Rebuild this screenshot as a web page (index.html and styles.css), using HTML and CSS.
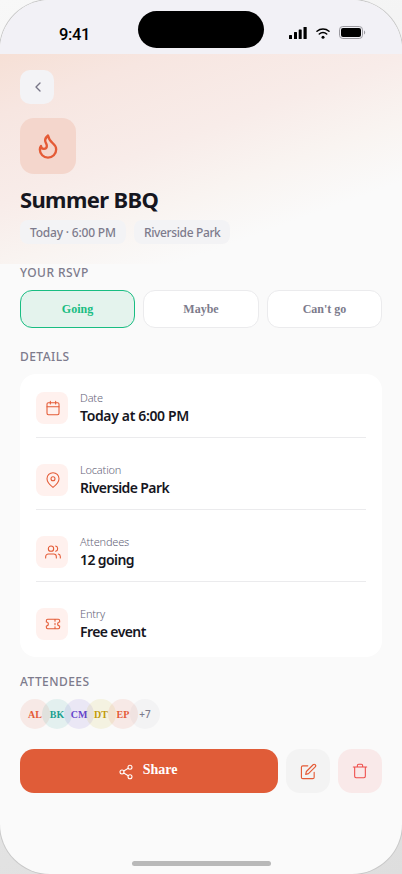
FILE: index.html
```html
<!DOCTYPE html>
<html lang="en">
<head>
<meta charset="utf-8">
<meta name="viewport" content="width=device-width, initial-scale=1">
<title>Summer BBQ</title>
<link rel="stylesheet" href="styles.css">
</head>
<body>
<div class="phone">
  <div class="status">
    <span class="time">9:41</span>
    <span class="island"></span>
    <span class="signals">
      <svg width="18" height="12" viewBox="0 0 18 12"><rect x="0" y="8" width="3" height="4" rx=".6"/><rect x="5" y="5" width="3" height="7" rx=".6"/><rect x="9.700" y="2.500" width="3" height="9.500" rx=".6"/><rect x="14.500" y="0" width="3.200" height="12" rx=".6"/></svg>
      <svg class="wifi" width="14" height="12" viewBox="0 0 14 12"><path d="M1 4.300a9 9 0 0 1 12 0M3.300 7a5.600 5.600 0 0 1 7.400 0" fill="none" stroke="#000" stroke-width="1.500" stroke-linecap="round"/><circle cx="7" cy="10.300" r="1.500"/></svg>
      <svg class="battery" width="27" height="13" viewBox="0 0 27 13"><rect x=".5" y=".5" width="23" height="12" rx="3.300" fill="none" stroke="#9b9aa0"/><rect x="2" y="2" width="20" height="9" rx="2"/><path d="M25 4.500v4c1.600-.7 1.600-3.300 0-4z" fill="#9b9aa0"/></svg>
    </span>
  </div>
  <header class="hero">
    <button class="back" aria-label="Back"><svg class="line" width="16" height="16" viewBox="0 0 24 24"><path d="m15 18-6-6 6-6"/></svg></button>
    <div class="emblem"><svg class="line" width="28" height="28" viewBox="0 0 24 24"><path d="M8.500 14.500A2.500 2.500 0 0 0 11 12c0-1.380-.5-2-1-3-1.072-2.143-.224-4.054 2-6 .5 2.500 2 4.900 4 6.500 2 1.600 3 3.500 3 5.500a7 7 0 1 1-14 0c0-1.153.433-2.294 1-3a2.500 2.500 0 0 0 2.500 2.500z"/></svg></div>
    <h1>Summer BBQ</h1>
    <div class="chips"><span class="chip chip-time">Today · 6:00 PM</span><span class="chip chip-place">Riverside Park</span></div>
  </header>
  <main>
    <h2>YOUR RSVP</h2>
    <div class="rsvp"><button class="on">Going</button><button>Maybe</button><button>Can't go</button></div>
    <h2>DETAILS</h2>
    <section class="card">
      <div class="row"><span class="tile"><svg class="line" width="16" height="16" viewBox="0 0 24 24"><rect x="3" y="4" width="18" height="18" rx="2"/><path d="M8 2v4M16 2v4M3 10h18"/></svg></span><div><p class="label">Date</p><p class="value v-date">Today at 6:00 PM</p></div></div>
      <div class="row"><span class="tile"><svg class="line" width="16" height="16" viewBox="0 0 24 24"><path d="M21 10c0 6-9 13-9 13S3 16 3 10a9 9 0 0 1 18 0z"/><circle cx="12" cy="10" r="3"/></svg></span><div><p class="label">Location</p><p class="value">Riverside Park</p></div></div>
      <div class="row"><span class="tile"><svg class="line" width="16" height="16" viewBox="0 0 24 24"><path d="M17 21v-2a4 4 0 0 0-4-4H5a4 4 0 0 0-4 4v2"/><circle cx="9" cy="7" r="4"/><path d="M23 21v-2a4 4 0 0 0-3-3.870M16 3.130a4 4 0 0 1 0 7.750"/></svg></span><div><p class="label">Attendees</p><p class="value">12 going</p></div></div>
      <div class="row"><span class="tile"><svg class="line" width="16" height="16" viewBox="0 0 24 24"><path d="M2 9a3 3 0 0 1 0 6v2a2 2 0 0 0 2 2h16a2 2 0 0 0 2-2v-2a3 3 0 0 1 0-6V7a2 2 0 0 0-2-2H4a2 2 0 0 0-2 2zM15 5v3M15 11v2M15 16v3"/></svg></span><div><p class="label">Entry</p><p class="value">Free event</p></div></div>
    </section>
    <h2 class="h-attendees">ATTENDEES</h2>
    <div class="avatars"><span class="av coral">AL</span><span class="av teal">BK</span><span class="av violet">CM</span><span class="av gold">DT</span><span class="av coral">EP</span><span class="av more">+7</span></div>
    <div class="actions">
      <button class="share"><svg class="line" width="16" height="16" viewBox="0 0 24 24"><circle cx="18" cy="5" r="3"/><circle cx="6" cy="12" r="3"/><circle cx="18" cy="19" r="3"/><path d="m8.600 13.500 6.800 4M15.400 6.500l-6.800 4"/></svg><span>Share</span></button>
      <button class="square edit" aria-label="Edit"><svg class="line" width="17" height="17" viewBox="0 0 24 24"><path d="M11 4H4a2 2 0 0 0-2 2v14a2 2 0 0 0 2 2h14a2 2 0 0 0 2-2v-7"/><path d="M18.500 2.500a2.120 2.120 0 0 1 3 3L12 15l-4 1 1-4z"/></svg></button>
      <button class="square trash" aria-label="Delete"><svg class="line" width="16" height="16" viewBox="0 0 24 24"><path d="M2 6h20M20 6v14a2 2 0 0 1-2 2H6a2 2 0 0 1-2-2V6M8 6V4a2 2 0 0 1 2-2h4a2 2 0 0 1 2 2v2"/></svg></button>
    </div>
  </main>
  <div class="home"></div>
</div>
</body>
</html>
```
FILE: styles.css
```css
* { box-sizing: border-box; }
body { margin: 0; height: 874px; overflow: hidden; background: linear-gradient(160deg, #f8f8f8, #dedede); font-family: "Noto Sans", "Open Sans", sans-serif; color: #16161e; }
h1, h2, p { margin: 0; }
button { padding: 0; border: 0; font-family: "Liberation Serif", serif; font-weight: 700; }
svg { display: block; flex: none; }
.line { fill: none; stroke: currentColor; stroke-width: 1.600; stroke-linecap: round; stroke-linejoin: round; }
.phone { width: 402px; height: 874px; border-radius: 50px; overflow: hidden; background: #fafafa; box-shadow: 0 0 0 1px #c8c8c8; display: flex; flex-direction: column; }
.status { height: 54px; flex: none; background: #f2f1f6; display: grid; grid-template-columns: 138px 126px 138px; align-items: start; }
.time { margin: 22px 0 0 59px; font: 500 16.500px/25px Roboto, sans-serif; letter-spacing: -.4px; color: #000; }
.island { height: 37px; margin-top: 11px; border-radius: 19px; background: #000; }
.signals { display: flex; margin: 26px 0 0 25px; align-items: center; }
.signals svg { margin-top: 1px; }
.signals .wifi { margin-left: 9px; }
.signals .battery { margin: 0 0 0 9px; }
.hero { height: 210px; flex: none; padding: 16px 20px 0; background: linear-gradient(160deg, #f6e0d6 0%, #f7e6e1 17%, #f8ece9 42%, #f9f4f1 60%, #fafafa 77%); }
.back { width: 34px; height: 34px; border-radius: 10px; background: #f3f3f6; color: #777587; display: grid; place-items: center; }
.back .line { stroke-width: 2; margin-left: 1px; }
.emblem { width: 56px; height: 56px; margin-top: 14px; border-radius: 14px; background: #f4d6cc; color: #e45b36; display: grid; place-items: center; }
.emblem .line { stroke-width: 2; }
h1 { margin-top: 11px; font-size: 22px; line-height: 28px; font-weight: 700; letter-spacing: -.65px; white-space: nowrap; }
.chips { display: flex; gap: 8px; margin-top: 7px; }
.chip { height: 24px; padding-left: 10px; border-radius: 8px; background: #f3f3f5; color: #7d7b8c; font-size: 12px; line-height: 26px; font-weight: 500; white-space: nowrap; }
.chip-time { width: 106px; letter-spacing: -.2px; }
.chip-place { width: 96px; letter-spacing: -.37px; }
main { padding: 0 20px; }
h2 { font-size: 12px; line-height: 18px; height: 16px; font-weight: 500; letter-spacing: .45px; color: #7d7b8c; white-space: nowrap; }
.h-attendees { line-height: 16px; }
.rsvp { display: grid; grid-template-columns: 115px 116px 115px; gap: 8px; margin: 10px 0 20px; }
.rsvp button { height: 38px; border: 1px solid #ebebed; border-radius: 12px; background: #fff; color: #7d7b8c; font-size: 12px; }
.rsvp .on { background: #e4f3ed; border-color: #19bd82; color: #19bd82; }
.card { height: 283px; margin: 10px 0 17px; padding: 12px 16px; background: #fff; border-radius: 16px; }
.row { height: 52px; margin-bottom: 20px; display: flex; gap: 12px; border-bottom: 1px solid #ebebed; padding-top: 4px; }
.row:last-child { border: 0; }
.tile { width: 32px; height: 32px; margin-top: 2px; border-radius: 8px; background: #fff1ee; color: #e45b36; display: grid; place-items: center; flex: none; }
.tile svg { margin-left: 1px; }
.label { font-size: 11px; line-height: 16px; color: #656378; font-weight: 300; letter-spacing: -.18px; white-space: nowrap; }
.value { font-size: 14px; line-height: 20px; font-weight: 600; letter-spacing: -.6px; white-space: nowrap; }
.v-date { letter-spacing: -.35px; }
.avatars { display: flex; margin-top: 9px; }
.av { width: 30px; height: 30px; margin-right: -8px; border-radius: 50%; font: 700 10px/31px "Liberation Serif", serif; text-align: center; }
.coral { color: #e45b36; background: rgba(228, 91, 54, .1); }
.teal { color: #20a090; background: rgba(32, 160, 144, .1); }
.violet { color: #6544ca; background: rgba(101, 68, 202, .1); }
.gold { color: #c29a0c; background: rgba(194, 180, 12, .1); }
.more { color: #7d7b8c; background: rgba(125, 123, 140, .05); font: 500 10px/31px "Noto Sans", sans-serif; }
.actions { display: grid; grid-template-columns: 258px 44px 44px; gap: 8px; margin-top: 20px; }
.share { height: 44px; border-radius: 14px; background: #e05c38; color: #fff; font-size: 14px; display: flex; align-items: center; justify-content: center; gap: 9px; padding-right: 3px; }
.share svg { margin-top: 1px; }
.share span { margin-top: -3px; }
.square { height: 44px; border-radius: 14px; display: grid; place-items: center; color: #e45b36; background: #f3f3f3; }
.trash { color: #ee4b48; background: #f9e9e9; }
.home { width: 139px; height: 5px; border-radius: 3px; background: #b9b9b9; margin: auto auto 8px; }
```
